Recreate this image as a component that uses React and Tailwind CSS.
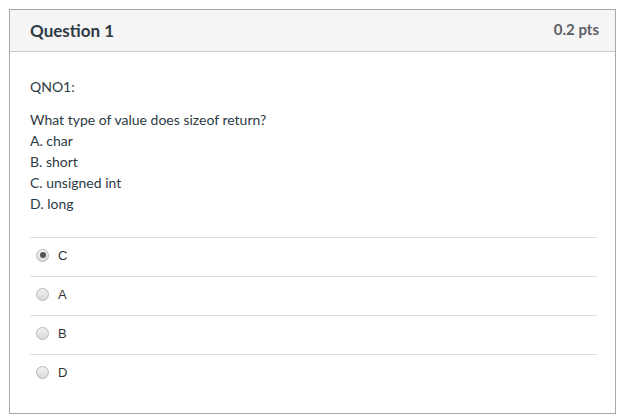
const answers = [
  { id: "c", label: "C", checked: true },
  { id: "a", label: "A", checked: false },
  { id: "b", label: "B", checked: false },
  { id: "d", label: "D", checked: false },
];

const Radio = ({ checked }) => (
  <span className="relative flex h-[13px] w-[13px] items-center justify-center rounded-full border border-[#b8b8b8] bg-gradient-to-b from-[#f2f2f2] to-[#d9d9d9]">
    {checked && <span className="h-[6px] w-[6px] rounded-full bg-[#555]" />}
  </span>
);

const App = () => {
  return (
    <div className="min-h-screen bg-white p-[9px] font-['Lato','Liberation_Sans',sans-serif] text-[#2d3b45]">
      <div className="border border-[#a8a8a8]">
        <div className="flex h-[42px] items-center justify-between border-b border-[#c7cdd1] bg-[#f5f5f5] pl-5 pr-[16px]">
          <h2 className="text-[17px] font-bold leading-none">Question 1</h2>
          <span className="-mt-[3px] text-[15px] font-bold text-[#5b6066]">0.2 pts</span>
        </div>

        <div className="pl-5 pr-[18px] pt-[24px] pb-[20px] text-[14px] leading-[21px]">
          <p>QNO1:</p>
          <p className="mt-[12px]">What type of value does sizeof return?</p>
          <p>A. char</p>
          <p>B. short</p>
          <p>C. unsigned int</p>
          <p>D. long</p>

          <div className="mt-[23px]">
            {answers.map((ans) => (
              <div
                key={ans.id}
                className="flex h-[39px] items-center gap-[9px] border-t border-[#dddddd] pb-[4px] pl-[6px]"
              >
                <Radio checked={ans.checked} />
                <span className="font-['Liberation_Sans',sans-serif] text-[13px] text-[#333]">
                  {ans.label}
                </span>
              </div>
            ))}
          </div>
        </div>
      </div>
    </div>
  );
};

export default App;
